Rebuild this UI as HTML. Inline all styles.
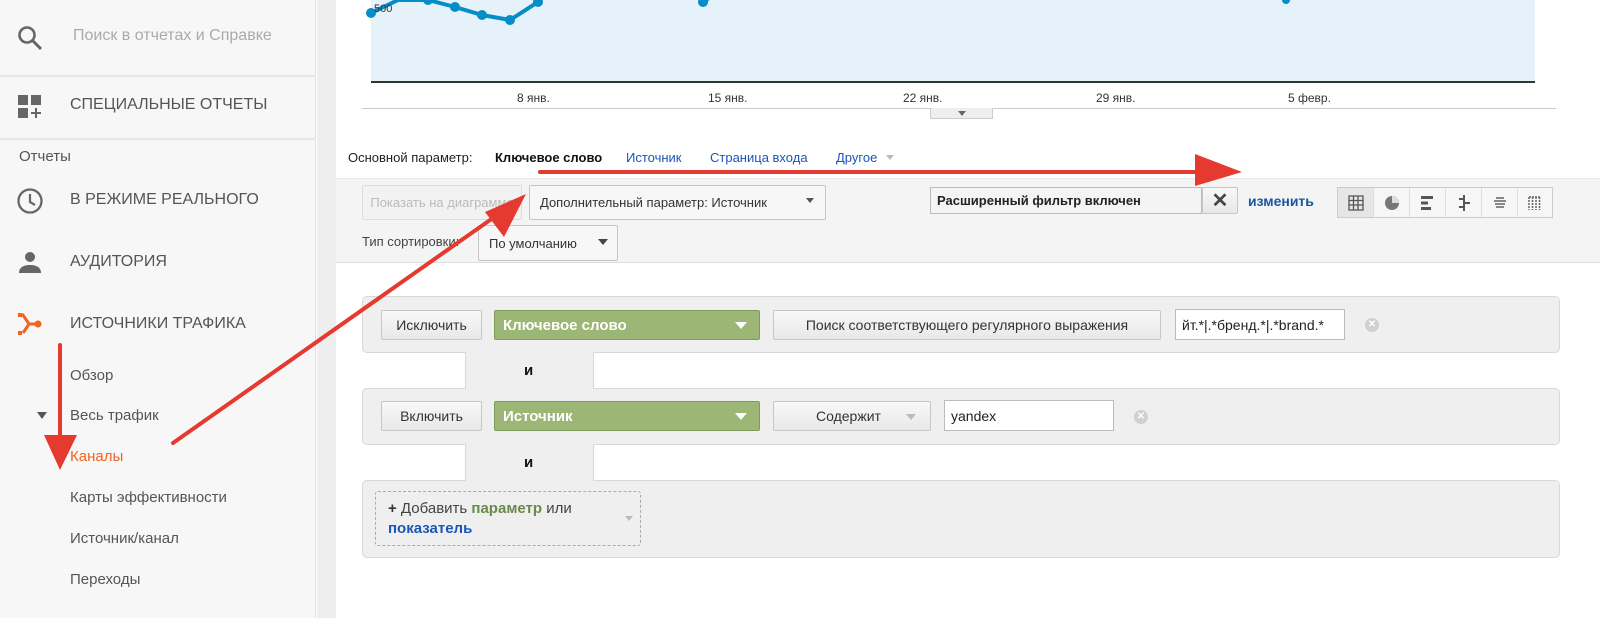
<!DOCTYPE html>
<html><head><meta charset="utf-8"><style>
*{box-sizing:border-box;margin:0;padding:0}
body{width:1600px;height:618px;overflow:hidden;background:#fff;font-family:"Liberation Sans",sans-serif;position:relative;color:#333}
.a{position:absolute}
.side{left:0;top:0;width:316px;height:618px;background:#f7f7f7;border-right:1px solid #ddd}
.gut{left:317px;top:0;width:19px;height:618px;background:#eeeeee}
.nav{color:#555;font-size:16px}
.sub{color:#555;font-size:15px}
.btn{border:1px solid #c6c6c6;border-radius:2px;background:linear-gradient(#f8f8f8,#e8e8e8);font-size:14px;color:#333;display:flex;align-items:center;justify-content:center}
.grn{background:#9cb675;border:1px solid #7f9a5c;border-radius:2px;color:#fff;font-weight:bold;font-size:15px;display:flex;align-items:center;padding-left:8px}
.tri{position:absolute;width:0;height:0;border-left:6px solid transparent;border-right:6px solid transparent;border-top:7px solid #fff}
.gbox{background:#efefef;border:1px solid #d8d8d8;border-radius:5px}
.inp{background:#fff;border:1px solid #bbb;font-size:14px;color:#222;display:flex;align-items:center;padding-left:6px}
.xc{width:14px;height:14px;border-radius:50%;background:#d0d0d0;color:#fff;font-size:10px;text-align:center;line-height:14px;font-weight:bold}
.lbl{font-size:12px;color:#333}
</style></head><body>
<div class="a side"></div>
<div class="a gut"></div>
<div class="a" style="left:0;top:75px;width:316px;height:2px;background:#e6e6e6"></div>
<div class="a" style="left:0;top:138px;width:316px;height:2px;background:#e6e6e6"></div>
<svg class="a" style="left:16px;top:24px" width="28" height="28" viewBox="0 0 28 28"><circle cx="11" cy="11" r="7.5" fill="none" stroke="#666" stroke-width="2.6"/><line x1="16.5" y1="16.5" x2="25" y2="25" stroke="#666" stroke-width="3"/></svg>
<div class="a" style="left:73px;top:27px;font-size:16px;color:#aaa;width:205px;overflow:hidden;white-space:nowrap">Поиск в отчетах и Справке</div>
<svg class="a" style="left:18px;top:95px" width="24" height="24"><rect x="0" y="0" width="10" height="10" fill="#666"/><rect x="13" y="0" width="10" height="10" fill="#666"/><rect x="0" y="13" width="10" height="10" fill="#666"/><path d="M18 13v10M13 18h10" stroke="#666" stroke-width="2"/></svg>
<div class="a nav" style="left:70px;top:96px">СПЕЦИАЛЬНЫЕ ОТЧЕТЫ</div>
<div class="a" style="left:19px;top:148px;font-size:15px;color:#555">Отчеты</div>
<svg class="a" style="left:16px;top:187px" width="28" height="28"><circle cx="14" cy="14" r="11.5" fill="none" stroke="#666" stroke-width="2.3"/><path d="M14 7v8l5 3" fill="none" stroke="#666" stroke-width="2.2"/></svg>
<div class="a nav" style="left:70px;top:191px">В РЕЖИМЕ РЕАЛЬНОГО</div>
<svg class="a" style="left:18px;top:251px" width="24" height="24"><circle cx="12" cy="6" r="5" fill="#666"/><path d="M1 22c0-6 5-8 11-8s11 2 11 8z" fill="#666"/></svg>
<div class="a nav" style="left:70px;top:253px">АУДИТОРИЯ</div>
<svg class="a" style="left:17px;top:312px" width="26" height="24"><path d="M2 3h4l6 9h8M6 21h0l6-9" fill="none" stroke="#f26322" stroke-width="3"/><rect x="1" y="1" width="4" height="4" fill="#f26322"/><rect x="1" y="19" width="4" height="4" fill="#f26322"/><circle cx="21" cy="12" r="3.5" fill="#f26322"/></svg>
<div class="a nav" style="left:70px;top:315px">ИСТОЧНИКИ ТРАФИКА</div>
<div class="a sub" style="left:70px;top:367px">Обзор</div>
<div class="a" style="left:37px;top:412px;width:0;height:0;border-left:5px solid transparent;border-right:5px solid transparent;border-top:7px solid #555"></div>
<div class="a sub" style="left:70px;top:407px">Весь трафик</div>
<div class="a sub" style="left:70px;top:448px;color:#f26322">Каналы</div>
<div class="a sub" style="left:70px;top:489px">Карты эффективности</div>
<div class="a sub" style="left:70px;top:530px">Источник/канал</div>
<div class="a sub" style="left:70px;top:571px">Переходы</div>

<div class="a" style="left:371px;top:0;width:1164px;height:81px;background:#e5f2f9"></div>
<div class="a" style="left:371px;top:81px;width:1164px;height:2px;background:#333"></div>
<svg class="a" style="left:360px;top:0" width="1200" height="40"><polyline points="11,13 38,0 68,0 95,7 122,15 150,20 178,2 182,0" fill="none" stroke="#058dc7" stroke-width="4"/><g fill="#058dc7"><circle cx="11" cy="13" r="5"/><circle cx="68" cy="0" r="5"/><circle cx="95" cy="7" r="5"/><circle cx="122" cy="15" r="5"/><circle cx="150" cy="20" r="5"/><circle cx="178" cy="2" r="5"/><circle cx="343" cy="2" r="5"/><circle cx="926" cy="0" r="4"/></g><path d="M343 2l6-4" stroke="#058dc7" stroke-width="4"/><text x="14" y="12" font-size="11" fill="#333" font-family="Liberation Sans">500</text></svg>
<div class="a lbl" style="left:517px;top:91px">8 янв.</div>
<div class="a lbl" style="left:708px;top:91px">15 янв.</div>
<div class="a lbl" style="left:903px;top:91px">22 янв.</div>
<div class="a lbl" style="left:1096px;top:91px">29 янв.</div>
<div class="a lbl" style="left:1288px;top:91px">5 февр.</div>
<div class="a" style="left:362px;top:108px;width:1194px;height:1px;background:#ccc"></div>
<div class="a" style="left:930px;top:108px;width:63px;height:11px;background:#eee;border:1px solid #ccc;border-top:none"></div>
<div class="a" style="left:958px;top:111px;width:0;height:0;border-left:4px solid transparent;border-right:4px solid transparent;border-top:5px solid #666"></div>

<div class="a" style="left:348px;top:150px;font-size:13px;color:#222">Основной параметр:</div>
<div class="a" style="left:495px;top:150px;font-size:13px;color:#111;font-weight:bold">Ключевое слово</div>
<div class="a" style="left:626px;top:150px;font-size:13px;color:#1a56b8">Источник</div>
<div class="a" style="left:710px;top:150px;font-size:13px;color:#1a56b8">Страница входа</div>
<div class="a" style="left:836px;top:150px;font-size:13px;color:#1a56b8">Другое</div>
<div class="a" style="left:886px;top:155px;width:0;height:0;border-left:4px solid transparent;border-right:4px solid transparent;border-top:5px solid #bbb"></div>

<div class="a" style="left:336px;top:178px;width:1264px;height:85px;background:#f4f4f4;border-bottom:1px solid #ddd;border-top:1px solid #e8e8e8"></div>
<div class="a btn" style="left:362px;top:185px;width:160px;height:35px;color:#bbb;background:#f2f2f2;border-color:#ddd;font-size:13px">Показать на диаграмме</div>
<div class="a btn" style="left:529px;top:185px;width:297px;height:35px;justify-content:flex-start;padding-left:10px;font-size:13px;background:#f7f7f7">Дополнительный параметр: Источник</div>
<div class="a" style="left:806px;top:198px;width:0;height:0;border-left:4px solid transparent;border-right:4px solid transparent;border-top:5px solid #555"></div>
<div class="a" style="left:362px;top:234px;font-size:13px;color:#444">Тип сортировки:</div>
<div class="a btn" style="left:478px;top:225px;width:140px;height:36px;justify-content:flex-start;padding-left:10px;font-size:13px;background:#f7f7f7">По умолчанию</div>
<div class="a" style="left:598px;top:239px;width:0;height:0;border-left:5px solid transparent;border-right:5px solid transparent;border-top:6px solid #444"></div>

<div class="a inp" style="left:930px;top:187px;width:272px;height:27px;font-weight:bold;font-size:13px;background:#f4f4f4;border-color:#bbb">Расширенный фильтр включен</div>
<div class="a btn" style="left:1202px;top:187px;width:36px;height:27px;font-size:20px;font-weight:bold;color:#444">✕</div>
<div class="a" style="left:1248px;top:193px;font-size:14px;font-weight:bold;color:#1a56a0">изменить</div>
<div class="a" style="left:1337px;top:187px;width:216px;height:31px;border:1px solid #ccc;background:#f6f6f6;display:flex">
<div style="width:36px;border-right:1px solid #ddd;background:#e6e6e6;display:flex;align-items:center;justify-content:center"><svg width="16" height="16"><path d="M1 1h14v14H1zM1 5.5h14M1 10h14M5.5 1v14M10 1v14" fill="none" stroke="#555" stroke-width="1.3"/></svg></div>
<div style="width:36px;border-right:1px solid #ddd;display:flex;align-items:center;justify-content:center"><svg width="16" height="16"><circle cx="8" cy="8" r="7" fill="#777"/><path d="M8 8V1a7 7 0 0 1 7 7z" fill="#ddd"/></svg></div>
<div style="width:36px;border-right:1px solid #ddd;display:flex;align-items:center;justify-content:center"><svg width="16" height="16"><rect x="1" y="1" width="12" height="3" fill="#555"/><rect x="1" y="6.5" width="7" height="3" fill="#555"/><rect x="1" y="12" width="10" height="3" fill="#555"/></svg></div>
<div style="width:36px;border-right:1px solid #ddd;display:flex;align-items:center;justify-content:center"><svg width="16" height="16"><path d="M8 0v16M3 4h5M8 8h6M3 12h5" stroke="#555" stroke-width="2"/></svg></div>
<div style="width:36px;border-right:1px solid #ddd;display:flex;align-items:center;justify-content:center"><svg width="16" height="16"><path d="M4 3h8M2 6h12M3 9h10M4 12h8" stroke="#888" stroke-width="2"/></svg></div>
<div style="width:34px;display:flex;align-items:center;justify-content:center"><svg width="16" height="16"><path d="M2 2v13M5.5 2v13M9 2v13M12.5 2v13M2 2h12" stroke="#666" stroke-width="1.5" stroke-dasharray="2 1"/></svg></div>
</div>

<div class="a gbox" style="left:362px;top:296px;width:1198px;height:57px"></div>
<div class="a gbox" style="left:362px;top:388px;width:1198px;height:57px"></div>
<div class="a gbox" style="left:362px;top:480px;width:1198px;height:78px"></div>
<div class="a" style="left:465px;top:352px;width:129px;height:37px;background:#efefef;border-left:1px solid #d8d8d8;border-right:1px solid #d8d8d8"></div>
<div class="a" style="left:465px;top:444px;width:129px;height:37px;background:#efefef;border-left:1px solid #d8d8d8;border-right:1px solid #d8d8d8"></div>
<div class="a" style="left:524px;top:362px;font-size:15px;font-weight:bold;color:#111">и</div>
<div class="a" style="left:524px;top:454px;font-size:15px;font-weight:bold;color:#111">и</div>

<div class="a btn" style="left:381px;top:310px;width:101px;height:30px">Исключить</div>
<div class="a grn" style="left:494px;top:310px;width:266px;height:30px">Ключевое слово</div>
<div class="tri" style="left:735px;top:322px"></div>
<div class="a btn" style="left:773px;top:310px;width:388px;height:30px">Поиск соответствующего регулярного выражения</div>
<div class="a inp" style="left:1175px;top:309px;width:170px;height:31px;overflow:hidden;white-space:nowrap">йт.*|.*бренд.*|.*brand.*</div>
<div class="a xc" style="left:1365px;top:318px">✕</div>

<div class="a btn" style="left:381px;top:401px;width:101px;height:30px">Включить</div>
<div class="a grn" style="left:494px;top:401px;width:266px;height:30px">Источник</div>
<div class="tri" style="left:735px;top:413px"></div>
<div class="a btn" style="left:773px;top:401px;width:158px;height:30px;justify-content:flex-start;padding-left:42px;font-size:14px">Содержит</div>
<div class="a" style="left:906px;top:414px;width:0;height:0;border-left:5px solid transparent;border-right:5px solid transparent;border-top:6px solid #bbb"></div>
<div class="a inp" style="left:944px;top:400px;width:170px;height:31px">yandex</div>
<div class="a xc" style="left:1134px;top:410px">✕</div>

<div class="a" style="left:375px;top:491px;width:266px;height:55px;border:1px dashed #aaa;border-radius:3px;padding:7px 12px;font-size:15px;line-height:20px;color:#444"><b style="color:#333">+</b> Добавить <b style="color:#6b8a4a">параметр</b> или<br><b style="color:#1a56b8">показатель</b></div>
<div class="a" style="left:625px;top:516px;width:0;height:0;border-left:4px solid transparent;border-right:4px solid transparent;border-top:5px solid #bbb"></div>

<svg class="a" style="left:0;top:0" width="1600" height="618">
<g stroke="#e53a2f" stroke-width="4" stroke-linecap="round" fill="#e53a2f">
<line x1="540" y1="172" x2="1205" y2="172"/>
<polygon points="1195,154 1242,172 1195,186" stroke="none"/>
<line x1="173" y1="443" x2="500" y2="213"/>
<polygon points="526,194 504,237 485,212" stroke="none"/>
<line x1="60" y1="345" x2="60" y2="445"/>
<polygon points="44,435 77,435 60,470" stroke="none"/>
</g></svg>
</body></html>
